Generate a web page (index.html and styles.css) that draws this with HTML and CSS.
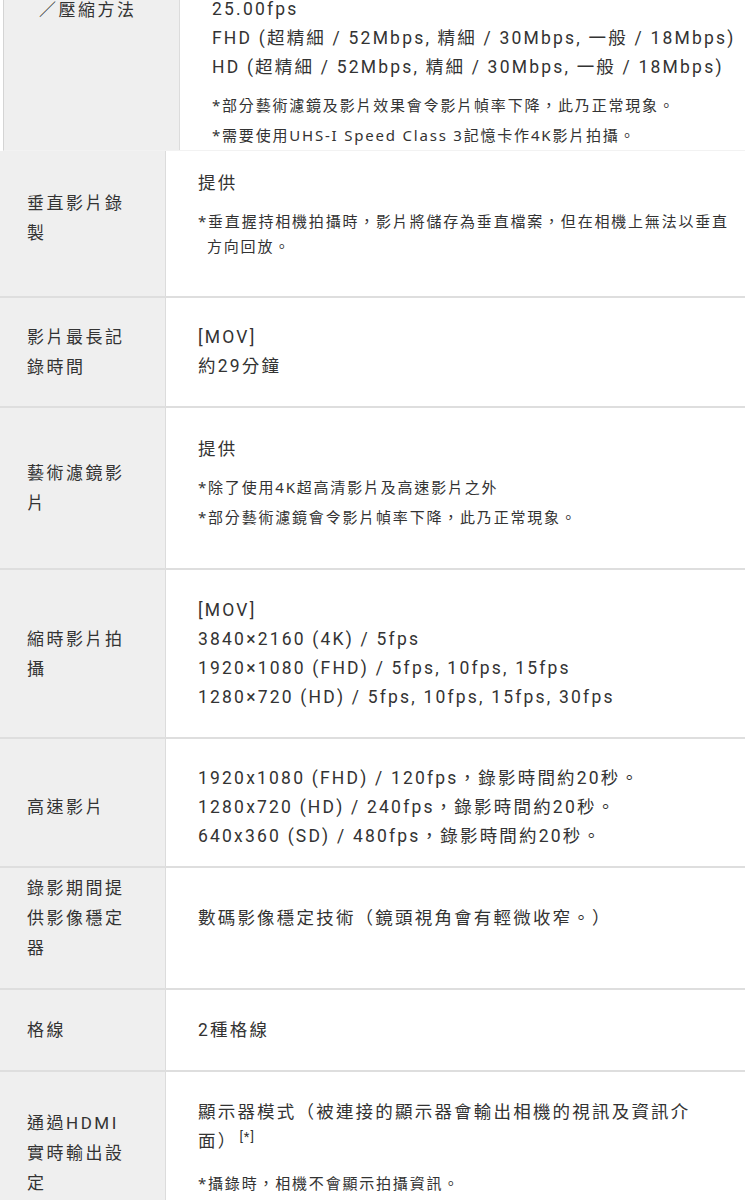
FILE: index.html
```html
<!DOCTYPE html>
<html lang="zh-Hant">
<head>
<meta charset="utf-8">
<title>規格</title>
<link rel="stylesheet" href="styles.css">
</head>
<body>
<div class="spec">
  <div class="spec-top">
    <div class="top-label"><div class="label-text">／壓縮方法</div></div>
    <div class="top-value">
      <div class="value-text">
        <p class="main">25.00fps</p>
        <p class="main">FHD (超精細 / 52Mbps, 精細 / 30Mbps, 一般 / 18Mbps)</p>
        <p class="main">HD (超精細 / 52Mbps, 精細 / 30Mbps, 一般 / 18Mbps)</p>
        <div class="notes">
          <p class="note">*部分藝術濾鏡及影片效果會令影片幀率下降，此乃正常現象。</p>
          <p class="note">*需要使用UHS-I Speed Class 3記憶卡作4K影片拍攝。</p>
        </div>
      </div>
    </div>
  </div>

  <div class="row h147">
    <div class="label lift-s">垂直影片錄製</div>
    <div class="value lift-l">
      <p class="main">提供</p>
      <div class="notes">
        <p class="note">*垂直握持相機拍攝時，影片將儲存為垂直檔案，但在相機上無法以垂直方向回放。</p>
      </div>
    </div>
  </div>

  <div class="row h110">
    <div class="label">影片最長記錄時間</div>
    <div class="value">
      <p class="main">[MOV]</p>
      <p class="main">約29分鐘</p>
    </div>
  </div>

  <div class="row h162">
    <div class="label">藝術濾鏡影片</div>
    <div class="value lift-m">
      <p class="main">提供</p>
      <div class="notes">
        <p class="note">*除了使用4K超高清影片及高速影片之外</p>
        <p class="note">*部分藝術濾鏡會令影片幀率下降，此乃正常現象。</p>
      </div>
    </div>
  </div>

  <div class="row h169">
    <div class="label">縮時影片拍攝</div>
    <div class="value">
      <p class="main">[MOV]</p>
      <p class="main">3840×2160 (4K) / 5fps</p>
      <p class="main">1920×1080 (FHD) / 5fps, 10fps, 15fps</p>
      <p class="main">1280×720 (HD) / 5fps, 10fps, 15fps, 30fps</p>
    </div>
  </div>

  <div class="row h129">
    <div class="label drop-s">高速影片</div>
    <div class="value drop-s">
      <p class="main">1920x1080 (FHD) / 120fps，錄影時間約20秒。</p>
      <p class="main">1280x720 (HD) / 240fps，錄影時間約20秒。</p>
      <p class="main">640x360 (SD) / 480fps，錄影時間約20秒。</p>
    </div>
  </div>

  <div class="row h122">
    <div class="label lift-l">錄影期間提供影像穩定器</div>
    <div class="value lift-l">
      <p class="main">數碼影像穩定技術（鏡頭視角會有輕微收窄。）</p>
    </div>
  </div>

  <div class="row h82">
    <div class="label">格線</div>
    <div class="value">
      <p class="main">2種格線</p>
    </div>
  </div>

  <div class="row h164">
    <div class="label">通過HDMI實時輸出設定</div>
    <div class="value lift-m">
      <p class="main">顯示器模式（被連接的顯示器會輸出相機的視訊及資訊介<br>面）<sup class="ref">[*]</sup></p>
      <div class="notes notes-wide">
        <p class="note">*攝錄時，相機不會顯示拍攝資訊。</p>
      </div>
    </div>
  </div>
</div>
</body>
</html>
```

FILE: styles.css
```css
* {
  box-sizing: border-box;
}

html, body {
  margin: 0;
  padding: 0;
  background: #ffffff;
}

body {
  font-family: Roboto, "Noto Sans CJK TC", sans-serif;
  color: #333333;
  width: 750px;
  overflow: hidden;
}

p {
  margin: 0;
}

.spec {
  width: 745px;
}

/* clipped tail of the previous table */
.spec-top {
  display: grid;
  grid-template-columns: 176px 1fr;
  height: 151px;
  overflow: hidden;
  margin-left: 3px;
  border-left: 1px solid #d4d4d4;
  border-bottom: 1px solid #f2f2f2;
}

.top-label {
  background: #efefef;
  border-right: 1px solid #dcdcdc;
  padding-left: 35px;
}

.top-label .label-text {
  margin-top: -4px;
  font-size: 17px;
  line-height: 29px;
  letter-spacing: 2.5px;
}

.top-value {
  padding-left: 32px;
  white-space: nowrap;
}

.top-value .value-text {
  margin-top: -5px;
}

/* rows */
.row {
  display: grid;
  grid-template-columns: 166px 1fr;
  border-bottom: 2px solid #dedede;
}

.h147 { height: 147px; }
.h110 { height: 110px; }
.h162 { height: 162px; }
.h169 { height: 169px; }
.h129 { height: 129px; }
.h122 { height: 122px; }
.h82 { height: 82px; }
.h164 { height: 164px; }

.label {
  background: #efefef;
  border-right: 1px solid #dcdcdc;
  padding: 0 28px 0 27px;
  font-size: 17px;
  line-height: 30px;
  letter-spacing: 2.5px;
  display: flex;
  flex-direction: column;
  justify-content: center;
}

.value {
  padding: 0 13px 0 32px;
  display: flex;
  flex-direction: column;
  justify-content: center;
}

.lift-s { padding-bottom: 11px; }
.lift-m { padding-bottom: 12px; }
.lift-l { padding-bottom: 20px; }
.drop-s { padding-top: 9px; }

.main {
  font-size: 17.5px;
  line-height: 29px;
  letter-spacing: 2.2px;
}

.notes {
  margin-top: 11px;
  display: flex;
  flex-direction: column;
  gap: 5px;
}

.notes-wide {
  margin-top: 15px;
}

.note {
  font-family: "Noto Sans", "Noto Sans CJK TC", sans-serif;
  font-size: 15px;
  line-height: 25px;
  letter-spacing: 1.8px;
  padding-left: 9px;
  text-indent: -9px;
}

.ref {
  font-size: 13px;
  line-height: 0;
  letter-spacing: 1px;
  vertical-align: 6px;
  margin-left: 2px;
}
```
